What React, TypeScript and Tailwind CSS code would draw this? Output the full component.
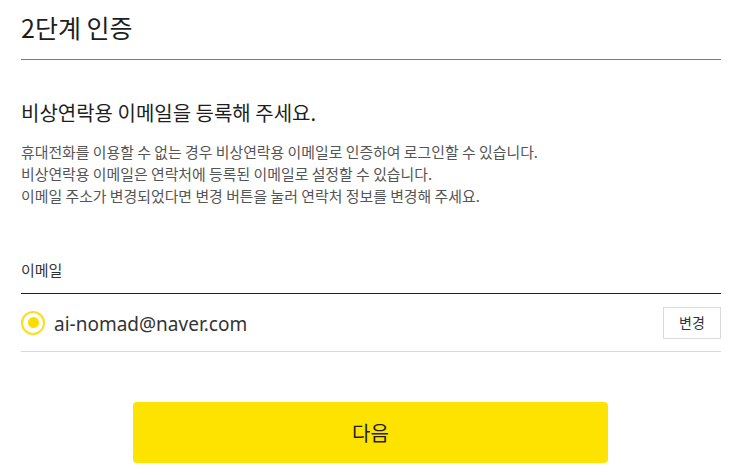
import React from "react";

export default function App() {
  const kr = { fontFamily: '"Noto Sans CJK KR", "Noto Sans", sans-serif' };
  return (
    <div className="w-[734px] h-[475px] bg-white text-[#222] overflow-hidden" style={kr}>
      <div className="px-[21px] pr-[13px]">
        <div className="h-[60px] border-b border-[#7a7a7a] pt-[10px]">
          <h1 className="text-[25px] leading-[34px] text-[#1e1e1e]">2단계 인증</h1>
        </div>
        <h2 className="mt-[39px] text-[20px] leading-[28px] text-[#1e1e1e]">비상연락용 이메일을 등록해 주세요.</h2>
        <div className="mt-[14px] text-[14.9px] leading-[22px] text-[#555]">
          <p>휴대전화를 이용할 수 없는 경우 비상연락용 이메일로 인증하여 로그인할 수 있습니다.</p>
          <p>비상연락용 이메일은 연락처에 등록된 이메일로 설정할 수 있습니다.</p>
          <p>이메일 주소가 변경되었다면 변경 버튼을 눌러 연락처 정보를 변경해 주세요.</p>
        </div>
        <div className="mt-[52px] text-[15px] leading-[22px] text-[#333] pb-[12px] border-b border-[#222]">이메일</div>
        <div className="h-[58px] flex items-center border-b border-[#d8d8d8]">
          <span className="w-[24px] h-[24px] rounded-full border-[2px] border-[#ffdc1e] flex items-center justify-center">
            <span className="w-[11px] h-[11px] rounded-full bg-[#ffdc00]" />
          </span>
          <span className="ml-[9px] mt-[3px] text-[19px] text-[#333]" style={{ fontFamily: '"Noto Sans", sans-serif' }}>ai-nomad@naver.com</span>
          <button className="ml-auto w-[58px] h-[32px] border border-[#dadada] bg-white text-[14px] text-[#333]">변경</button>
        </div>
        <div className="flex justify-center pt-[50px] pr-[1px]">
          <button className="w-[475px] h-[61px] rounded-[4px] bg-[#ffe300] text-[20px] text-[#1e1e1e]">다음</button>
        </div>
      </div>
    </div>
  );
}
